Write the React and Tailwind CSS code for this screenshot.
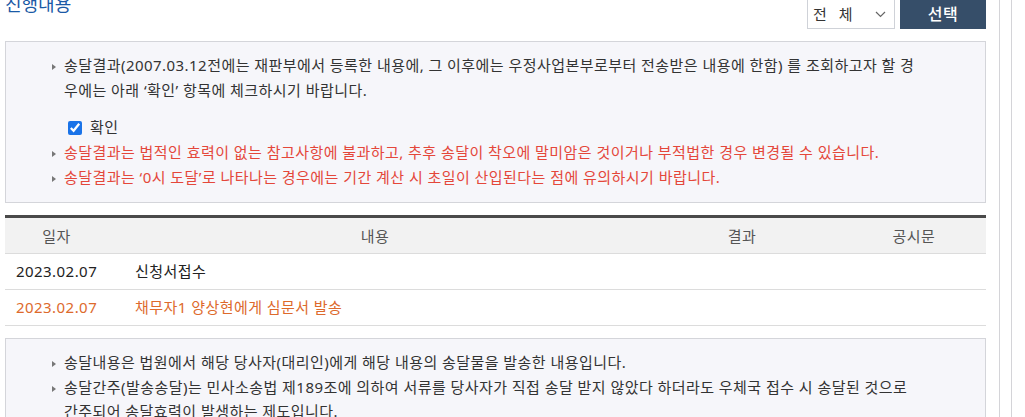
const font = { fontFamily: '"Noto Sans", "Noto Sans CJK KR", sans-serif' };

const Bullet = () => (
  <span className="inline-block w-0 h-0 border-y-[3.5px] border-y-transparent border-l-[4px] border-l-[#777] mr-[8px] align-middle" />
);

const Note = ({ children, red }) => (
  <div className={"flex items-start " + (red ? "text-[#e4473a]" : "text-[#333]")}>
    <span className="w-[12px] shrink-0 flex items-center h-[25px] pt-[3px]">
      <Bullet />
    </span>
    <div>{children}</div>
  </div>
);

const rows = [
  { date: "2023.02.07", text: "신청서접수", color: "text-[#222]" },
  { date: "2023.02.07", text: "채무자1 양상현에게 심문서 발송", color: "text-[#dd6a2c]" },
];

const App = () => {
  return (
    <div style={font} className="flex w-[1025px] h-[417px] overflow-hidden bg-white text-[15px] leading-[25px] tracking-[0.45px]">
      <div className="w-[1000px] shrink-0 pl-[5px] pr-[13px] border-r border-[#d4d4d8]">
        {/* title + filter */}
        <div className="flex items-start justify-between h-[41px]">
          <h2 className="text-[18px] leading-[18px] text-[#1b5aa6] -mt-[5px] tracking-normal">진행내용</h2>
          <div className="flex gap-[5px] -mt-[3px]">
            <div className="w-[88px] h-[32px] border border-[#cfd2d8] bg-white flex items-center justify-between pl-[5px] pr-[8px] pt-[3px] text-[#333]">
              <span className="tracking-[4px]">전 체</span>
              <svg width="11" height="7" viewBox="0 0 11 7" fill="none" stroke="#666" strokeWidth="1.2">
                <path d="M1 1l4.5 4.5L10 1" />
              </svg>
            </div>
            <button className="w-[86px] h-[32px] bg-[#364e69] text-white text-[16px] pt-[3px] font-medium">선택</button>
          </div>
        </div>

        {/* notice box */}
        <div className="h-[162px] border border-[#d4d5da] bg-[#f6f6fa] pl-[46px] pt-[11px]">
          <Note>
            <div className="whitespace-nowrap">송달결과(2007.03.12전에는 재판부에서 등록한 내용에, 그 이후에는 우정사업본부로부터 전송받은 내용에 한함) 를 조회하고자 할 경</div>
            <div>우에는 아래 ‘확인’ 항목에 체크하시기 바랍니다.</div>
          </Note>
          <label className="flex items-center mt-[12px] ml-[16px] text-[#333]">
            <input type="checkbox" defaultChecked className="w-[14px] h-[14px] mr-[8px] accent-[#1a73e8]" />
            확인
          </label>
          <Note red>송달결과는 법적인 효력이 없는 참고사항에 불과하고, 추후 송달이 착오에 말미암은 것이거나 부적법한 경우 변경될 수 있습니다.</Note>
          <Note red>송달결과는 ‘0시 도달’로 나타나는 경우에는 기간 계산 시 초일이 산입된다는 점에 유의하시기 바랍니다.</Note>
        </div>

        {/* table */}
        <div className="mt-[12px] border-t-[3px] border-[#4a4a4a]">
          <div className="grid grid-cols-[103px_534px_200px_144px] h-[36px] items-center bg-[#f2f2f2] border-b border-[#dcdcdc] text-[#555] text-center pt-[1px]">
            <div>일자</div>
            <div>내용</div>
            <div>결과</div>
            <div>공시문</div>
          </div>
          {rows.map((r, i) => (
            <div key={i} className={"grid grid-cols-[103px_534px_200px_144px] h-[36px] items-center border-b border-[#dcdcdc] " + r.color}>
              <div className="pl-[11px] whitespace-nowrap">{r.date}</div>
              <div className="pl-[27px]">{r.text}</div>
              <div></div>
              <div></div>
            </div>
          ))}
        </div>

        {/* second notice */}
        <div className="mt-[12px] h-[100px] border border-[#d4d5da] bg-[#f6f6fa] pl-[46px] pt-[11px] leading-[24px]">
          <Note>송달내용은 법원에서 해당 당사자(대리인)에게 해당 내용의 송달물을 발송한 내용입니다.</Note>
          <Note>
            <div className="whitespace-nowrap">송달간주(발송송달)는 민사소송법 제189조에 의하여 서류를 당사자가 직접 송달 받지 않았다 하더라도 우체국 접수 시 송달된 것으로</div>
            <div>간주되어 송달효력이 발생하는 제도입니다.</div>
          </Note>
        </div>
      </div>
      <div className="w-[12px] shrink-0 border-r border-[#d4d4d8]" />
    </div>
  );
};

export default App;
